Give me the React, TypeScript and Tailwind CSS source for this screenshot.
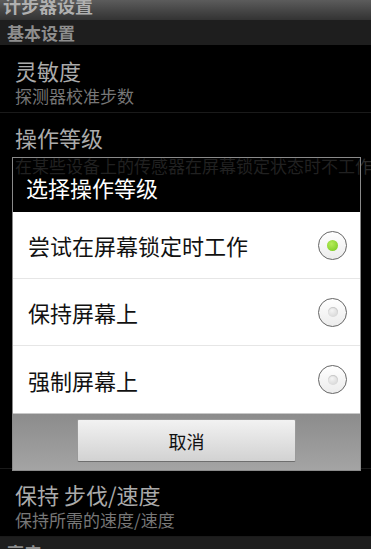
import React from 'react';

// ── Background preference list ──────────────────────────────────────────────
function PrefItem({ title, summary }: { title: string; summary: string }) {
  return (
    <div className="border-b border-[#1a1a1a] px-[15px] pt-[12px] pb-[5px]">
      <div className="text-[22px] leading-[26px] text-[#ababab]">{title}</div>
      <div className="mt-[2px] text-[17px] leading-[22px] text-[#777]">{summary}</div>
    </div>
  );
}

function Radio({ checked }: { checked?: boolean }) {
  return (
    <div className="flex h-[29px] w-[29px] items-center justify-center rounded-full border-[1.5px] border-[#666] bg-gradient-to-b from-[#ffffff] to-[#ececec]">
      {checked ? (
        <div className="h-[11px] w-[11px] rounded-full bg-[radial-gradient(circle_at_40%_35%,#b6ec5a,#74c81c)]" />
      ) : (
        <div className="h-[10px] w-[10px] rounded-full bg-[radial-gradient(circle_at_40%_35%,#f4f4f4,#cfcfcf)] shadow-[inset_0_1px_1px_rgba(0,0,0,0.15)]" />
      )}
    </div>
  );
}

const options = [
  { label: '尝试在屏幕锁定时工作', checked: true },
  { label: '保持屏幕上', checked: false },
  { label: '强制屏幕上', checked: false },
];

export default function App() {
  return (
    <div
      className="relative h-[549px] w-[371px] overflow-hidden bg-black"
      style={{ fontFamily: '"Noto Sans CJK SC", "Noto Sans", sans-serif' }}
    >
      {/* title bar */}
      <div className="h-[20px] overflow-hidden bg-gradient-to-b from-[#5c5c5c] to-[#333] px-[3px]">
        <div className="-mt-[8px] text-[18px] font-bold leading-[26px] text-[#b0b0b0]">计步器设置</div>
      </div>

      {/* category */}
      <div className="flex h-[25px] items-center bg-[#1e1e1e] px-[7px]">
        <span className="text-[17px] font-bold leading-[22px] text-[#8e8e8e]">基本设置</span>
      </div>

      <PrefItem title="灵敏度" summary="探测器校准步数" />
      <div className="h-[356px] overflow-hidden border-b border-[#1a1a1a]">
        <div className="px-[15px] pt-[11px]">
          <div className="text-[22px] leading-[26px] text-[#ababab]">操作等级</div>
          <div className="mt-[5px] whitespace-nowrap text-[17px] leading-[22px] text-[#2c2c2c]">
            在某些设备上的传感器在屏幕锁定状态时不工作
          </div>
        </div>
      </div>
      <PrefItem title="保持 步伐/速度" summary="保持所需的速度/速度" />

      <div className="flex h-[25px] items-start bg-[#1e1e1e] px-[7px]">
        <span className="mt-[5px] text-[17px] font-bold leading-[22px] text-[#8e8e8e]">高度</span>
      </div>

      {/* dialog */}
      <div className="absolute left-[12px] top-[157px] w-[349px] border border-[#8a8a8a]">
        <div className="h-[54px] bg-black/25 px-[13px] pt-[16px]">
          <div className="text-[22px] leading-[26px] text-white">选择操作等级</div>
        </div>
        <div className="bg-white">
          {options.map((o, i) => (
            <div
              key={o.label}
              className={`flex h-[67px] items-center justify-between pl-[15px] pr-[13px] ${
                i < options.length - 1 ? 'border-b border-[#e6e6e6]' : ''
              }`}
            >
              <span className="text-[22px] leading-[26px] text-[#111]">{o.label}</span>
              <Radio checked={o.checked} />
            </div>
          ))}
        </div>
        <div className="flex h-[57px] justify-center border-t border-[#c8c8c8] bg-gradient-to-b from-[#8c8c8c] to-[#a4a4a4] pt-[5px]">
          <div className="flex h-[43px] w-[219px] items-center justify-center rounded-[2px] border border-[#9a9a9a] border-b-[#6e6e6e] bg-gradient-to-b from-[#f2f2f2] to-[#d2d2d2]">
            <span className="text-[18px] leading-[24px] text-[#111]">取消</span>
          </div>
        </div>
      </div>
    </div>
  );
}
